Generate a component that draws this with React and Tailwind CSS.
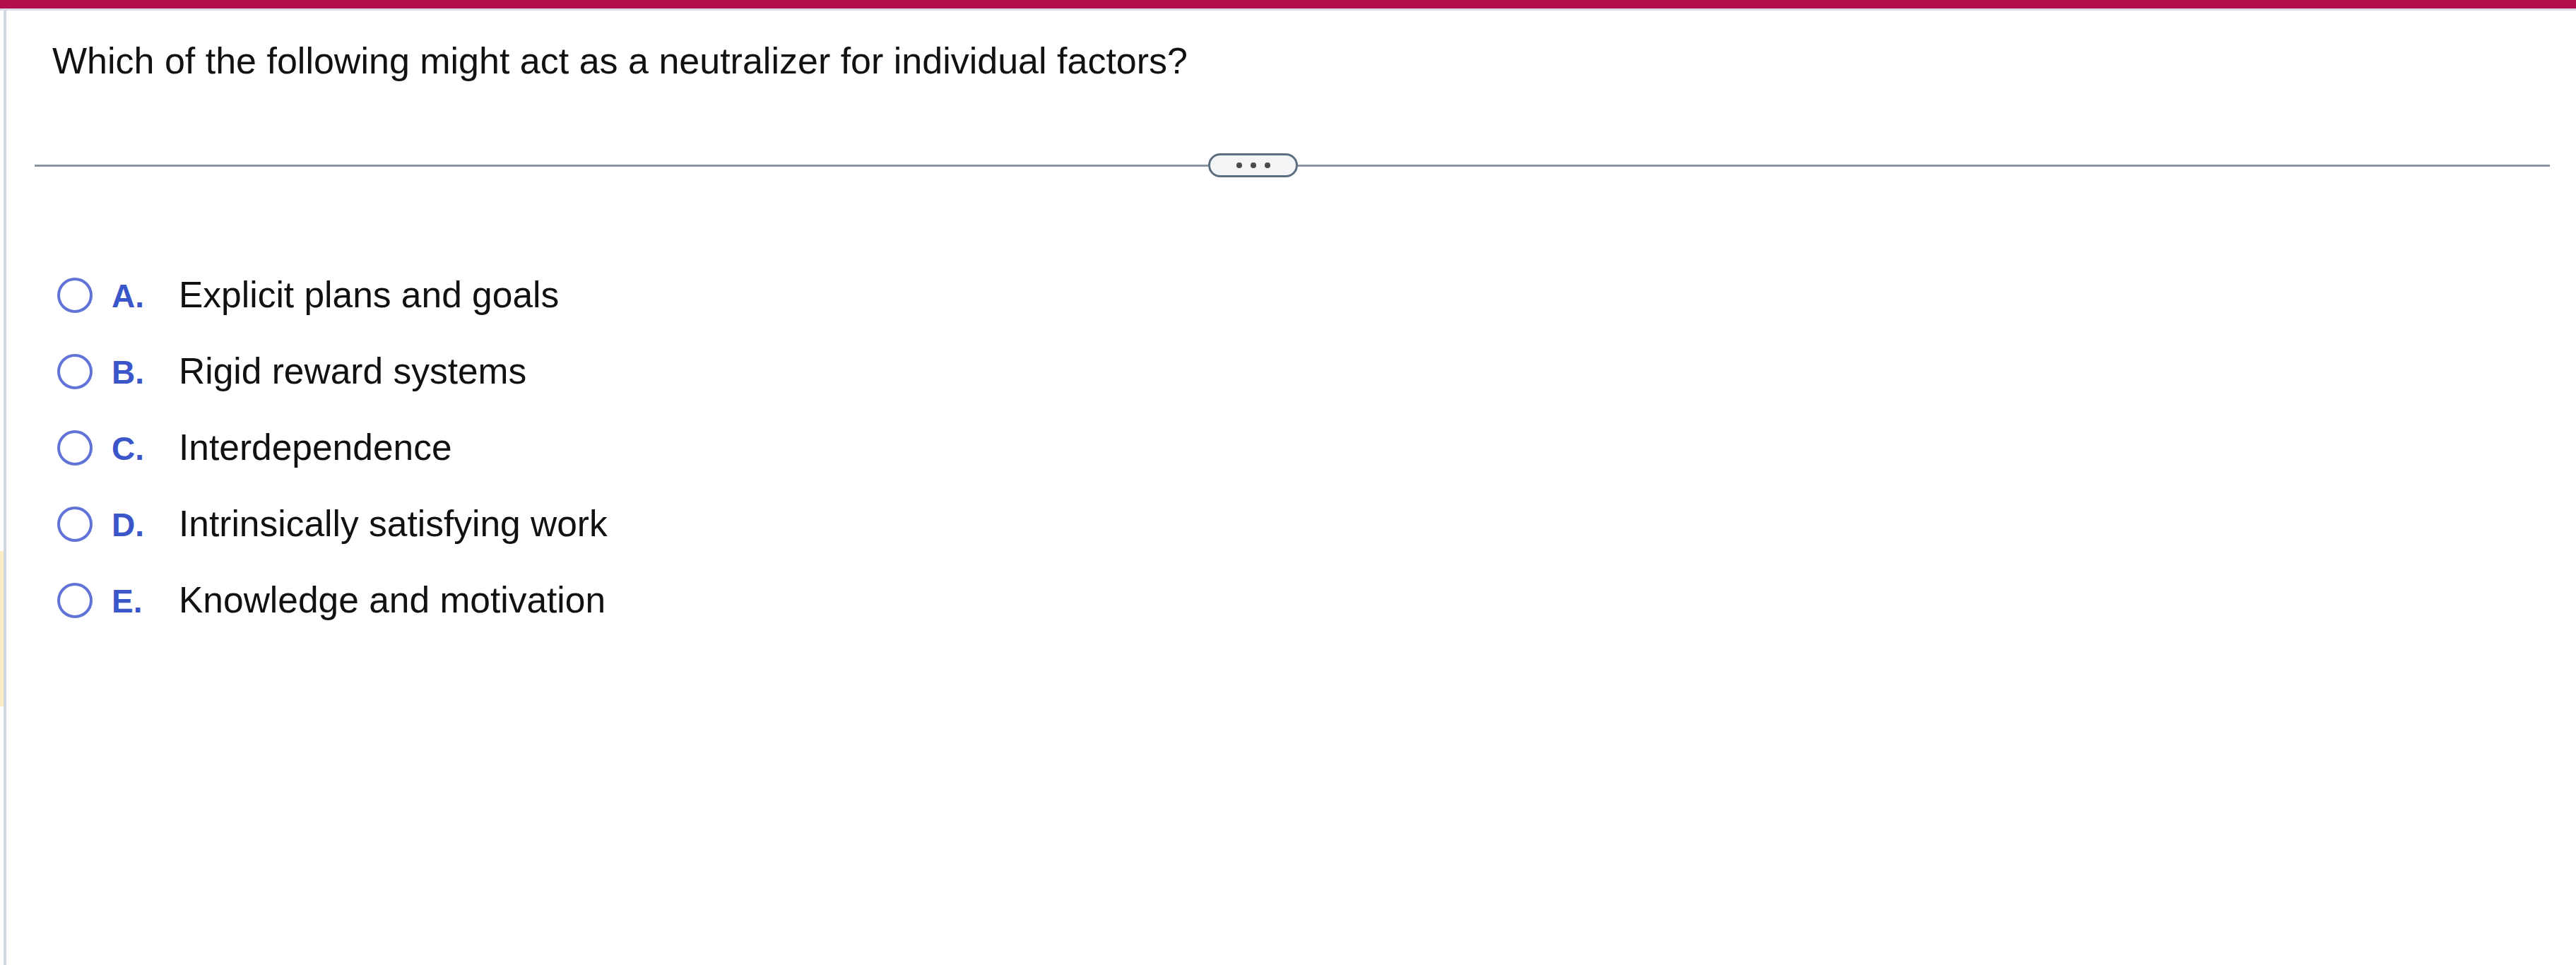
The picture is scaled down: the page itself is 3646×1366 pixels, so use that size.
import React from 'react';

const options = [
  { key: 'A', text: 'Explicit plans and goals' },
  { key: 'B', text: 'Rigid reward systems' },
  { key: 'C', text: 'Interdependence' },
  { key: 'D', text: 'Intrinsically satisfying work' },
  { key: 'E', text: 'Knowledge and motivation' },
];

const OptionRow = ({ option }) => (
  <li className="flex h-[108px] items-center">
    {/* radio */}
    <span className="h-[50px] w-[50px] flex-shrink-0 rounded-full border-[4px] border-[#6273d8] bg-white" />
    <div className="ml-[27px] flex items-baseline">
      <span className="w-[95px] text-[46px] font-bold leading-[58px] text-[#3b56c9]">
        {option.key}.
      </span>
      <span className="text-[51.5px] leading-[58px] text-[#111111]">{option.text}</span>
    </div>
  </li>
);

export default function App() {
  return (
    <div
      className="flex h-[1366px] flex-col bg-white"
      style={{ fontFamily: '"Liberation Sans", Arial, Helvetica, sans-serif' }}
    >
      {/* top bar */}
      <div className="h-[12px] bg-[#b20e4c]" />
      <div className="h-[3px] bg-[#d9dde6]" />

      <div className="flex flex-1">
        {/* left edge */}
        <div className="flex w-[5px] flex-col">
          <div className="h-[765px]" />
          <div className="h-[220px] bg-[#fbeec5]" />
        </div>
        <div className="w-[4px] bg-[#cfd7e2]" />

        {/* content */}
        <div className="flex-1">
          <h1 className="mt-[41px] pl-[65px] text-[52px] font-normal leading-[60px] text-[#111111]">
            Which of the following might act as a neutralizer for individual factors?
          </h1>

          {/* divider with more button */}
          <div className="mt-[101px] flex h-[34px] items-center pl-[40px] pr-[37px]">
            <div className="h-[3px] w-[1661px] bg-[#8a92a4]" />
            <button
              type="button"
              className="flex h-[34px] w-[127px] flex-shrink-0 items-center justify-center gap-[12px] rounded-full border-[3px] border-[#5d6d80] bg-[#f3f4f6]"
              aria-label="More"
            >
              <span className="h-[8px] w-[8px] rounded-full bg-[#4b4b4b]" />
              <span className="h-[8px] w-[8px] rounded-full bg-[#4b4b4b]" />
              <span className="h-[8px] w-[8px] rounded-full bg-[#4b4b4b]" />
            </button>
            <div className="h-[3px] flex-1 bg-[#8a92a4]" />
          </div>

          {/* options */}
          <ul className="mt-[113px] pl-[72px]">
            {options.map((o) => (
              <OptionRow key={o.key} option={o} />
            ))}
          </ul>
        </div>
      </div>
    </div>
  );
}
